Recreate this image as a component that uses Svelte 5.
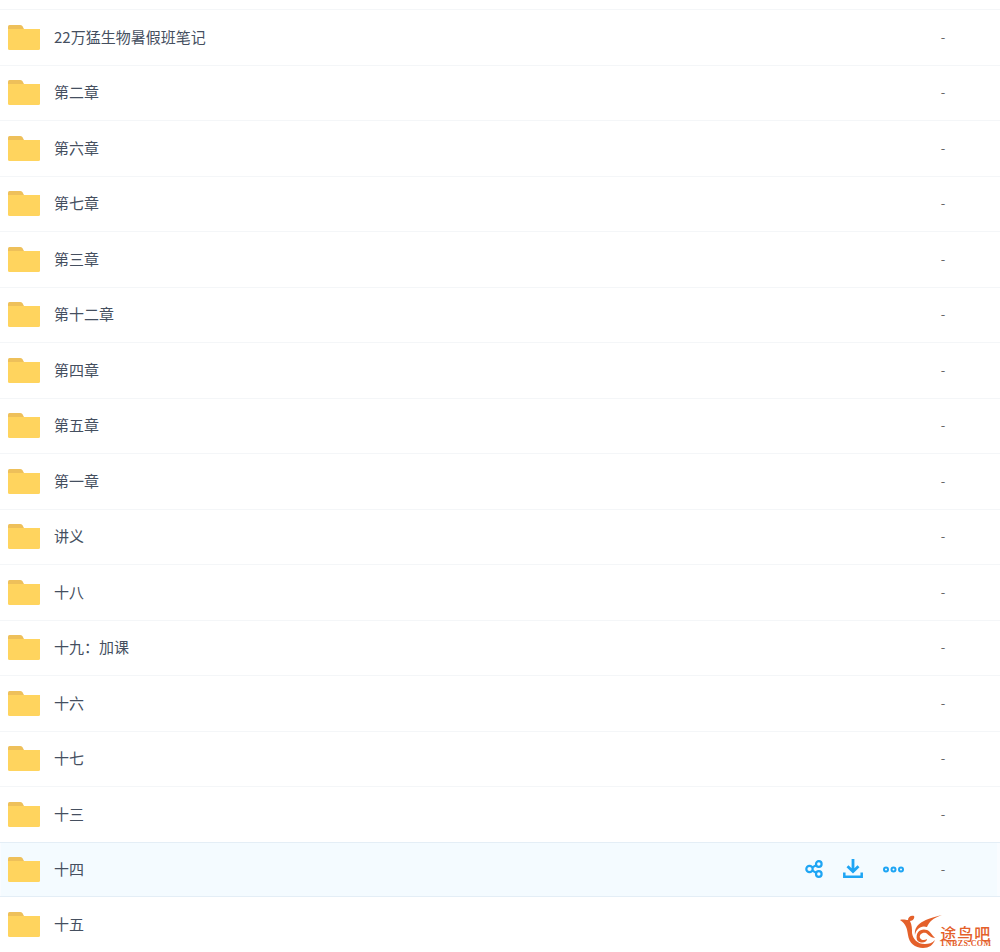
<script>
    const names = [
        "22万猛生物暑假班笔记", "第二章", "第六章", "第七章", "第三章", "第十二章",
        "第四章", "第五章", "第一章", "讲义", "十八", "十九：加课", "十六", "十七",
        "十三", "十四", "十五",
    ];
    const hovered = "十四";
    // the watermark sits on top of the last row's size column
    const covered = "十五";
</script>

<div class="page">
    <div class="list">
        {#each names as name}
            <div class="row" class:active={name == hovered}>
                <svg class="folder" viewBox="0 0 32 25" width="32" height="25">
                    <path d="M1.500 0H12q1.500 0 2.400 1L16 4H0V1.500Q0 0 1.500 0Z" fill="#eec05a" />
                    <path d="M0 4H32V23.500Q32 25 30.500 25H1.500Q0 25 0 23.500Z" fill="#ffd45e" />
                </svg>
                <div class="name">{name}</div>
                {#if name == hovered}
                    <div class="actions">
                        <svg viewBox="0 0 18 18" width="18" height="18" fill="none" stroke="#1ea5f4" stroke-width="2.200">
                            <circle cx="4.500" cy="9" r="3.200" />
                            <circle cx="13.800" cy="4" r="2.800" />
                            <circle cx="13.800" cy="14" r="2.800" />
                            <path d="M7.300 7.400 11.300 5.300M7.300 10.600 11.300 12.700" />
                        </svg>
                        <svg viewBox="0 0 20 20" width="20" height="20" fill="none" stroke="#1ea5f4" stroke-width="2.800">
                            <path d="M10 0V12M4.500 7.200 10 12.600 15.500 7.200" />
                            <path d="M1.300 13.500V17.800H18.700V13.500" stroke-width="2.500" />
                        </svg>
                        <svg viewBox="0 0 21 7" width="21" height="7" fill="none" stroke="#1ea5f4" stroke-width="2">
                            <circle cx="3" cy="3.500" r="2" />
                            <circle cx="10.500" cy="3.500" r="2" />
                            <circle cx="18" cy="3.500" r="2" />
                        </svg>
                    </div>
                {/if}
                {#if name != covered}
                    <div class="size">-</div>
                {/if}
            </div>
        {/each}
    </div>

    <div class="logo">
        <svg viewBox="0 0 46 38" width="46" height="38" fill="#e4602a">
            <path d="M4 8C7 7 10 8 12 8C12 5 15 3 18 4C19 6 17 9 14 9C16 13 16 17 16 21C17 27 21 32 29 32C33 32 36 31 39 28C37 33 33 36 27 36C19 36 13 31 12 23C11 16 10 12 4 8Z" />
            <path d="M46 3C37 6 33 10 31 15C25 13 20 17 19 23C18 14 24 8 46 3Z" />
            <path d="M21 28C19 20 25 16 31 18C34 19 36 23 39 26C35 26 33 23 30 21C26 20 23 23 24 26C25 28 28 29 31 27C31 31 24 32 21 28Z" />
        </svg>
        <div class="logoText">
            <div class="logoCn">途鸟吧</div>
            <div class="logoEn">TNBZS.COM</div>
        </div>
    </div>
</div>

<style>
    :global(body) {
        background: #fff;
    }
    .page {
        position: relative;
        height: 952px;
        overflow: hidden;
        font-family: "Noto Sans CJK SC", sans-serif;
    }
    .list {
        padding-top: 9px;
    }
    .row {
        display: flex;
        align-items: center;
        box-sizing: border-box;
        height: 55.5px;
        padding: 0 54px 0 8px;
        border-top: 1px solid #f4f6f8;
        color: #454f5f;
        font-size: 15px;
    }
    .active {
        background: #f4fbff;
        border-top: 1px solid #e4eef6;
        border-bottom: 1px solid #e4eef6;
        box-shadow: inset -3px 0 0 #f9fcff, inset 1px 0 0 #f9fcff;
    }
    .active + .row {
        border-top: 0;
    }
    .folder {
        flex: none;
    }
    .name {
        flex: 1;
        margin: 0 0 2px 14px;
    }
    .actions {
        display: flex;
        align-items: center;
        gap: 20px;
        margin-right: 36px;
    }
    .size {
        width: 6px;
        margin-bottom: 2px;
        text-align: center;
        color: #666;
        font-size: 13px;
    }
    .logo {
        position: absolute;
        left: 896px;
        top: 912px;
        display: flex;
        color: #e4602a;
    }
    .logoText {
        margin: 14px 0 0 -2px;
        text-align: center;
    }
    .logoCn {
        font-size: 16px;
        line-height: 14px;
        letter-spacing: 1px;
        font-weight: 500;
    }
    .logoEn {
        font-family: "Liberation Serif", serif;
        font-size: 8px;
        line-height: 7px;
        font-weight: bold;
        letter-spacing: 0.4px;
    }
</style>
